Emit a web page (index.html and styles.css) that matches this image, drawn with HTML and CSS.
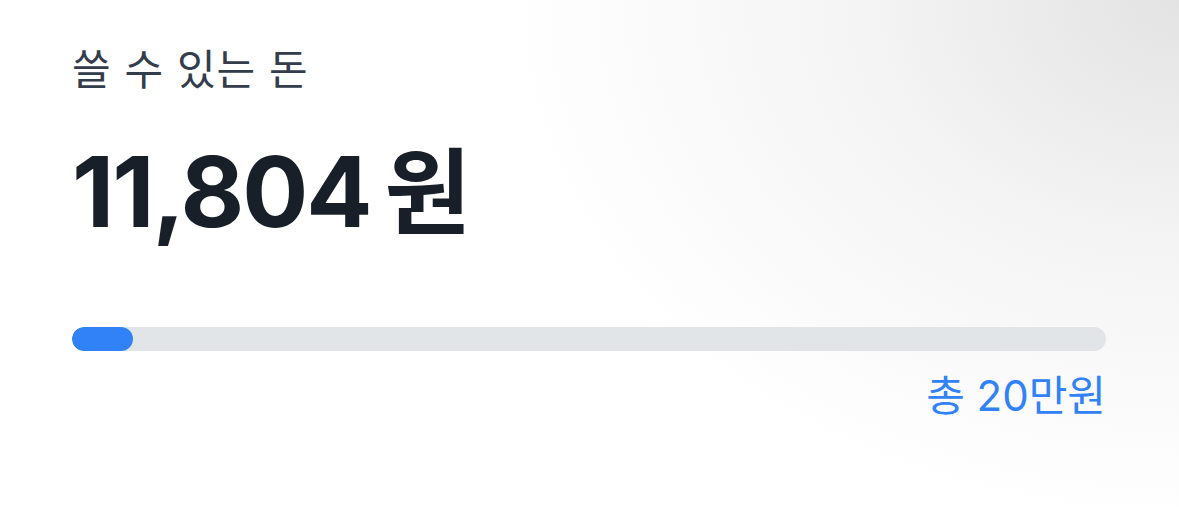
FILE: index.html
```html
<!DOCTYPE html>
<html lang="ko">
<head>
    <meta charset="UTF-8" />
    <meta name="viewport" content="width=device-width, initial-scale=1" />
    <title>쓸 수 있는 돈</title>
    <link rel="stylesheet" href="styles.css">
</head>
<body>
    <main class="budget">
        <p class="budget-label">쓸 수 있는 돈</p>
        <h1 class="budget-amount"><span class="num">11,804</span><span class="unit">원</span></h1>
        <div class="progress">
            <div class="progress-fill" style="width: 5.9%;"></div>
        </div>
        <p class="budget-total">총 20만원</p>
    </main>
</body>
</html>
```

FILE: styles.css
```css
html, body { margin: 0; height: 100%; }
body {
    font-family: Inter, "Noto Sans CJK KR", sans-serif;
    background: radial-gradient(ellipse 900px 700px at 100% 0%, #e3e3e3 0%, #f4f4f4 35%, #fff 75%);
    color: #191f28;
}
.budget { padding: 40px 73px 0 72px; }
.budget-label { margin: 0; font-size: 42px; line-height: 60px; color: #333d4b; letter-spacing: 1px; }
.budget-amount {
    margin: 37px 0 0;
    font-size: 98px;
    line-height: 110px;
    font-weight: 700;
}
.budget-amount .num { letter-spacing: -2px; }
.budget-amount .unit { margin-left: 14px; font-size: 94px; }
.progress { margin-top: 79px; height: 24px; border-radius: 12px; background: #e2e5e8; overflow: hidden; }
.progress-fill { height: 100%; background: #3182f6; border-radius: 12px; }
.budget-total { margin: 17px 0 0; text-align: right; font-size: 42px; line-height: 56px; color: #3182f6; }
```
